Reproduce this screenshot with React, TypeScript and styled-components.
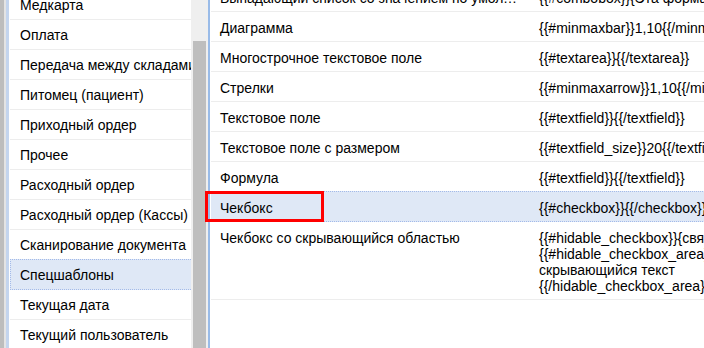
import styled, { createGlobalStyle } from 'styled-components';

const GlobalStyle = createGlobalStyle`
  html, body {
    margin: 0;
    padding: 0;
    background: #ffffff;
  }
  body {
    font-family: 'Liberation Sans', Arial, sans-serif;
    font-size: 14px;
    color: #000000;
  }
`;

const leftItems = [
  'Медкарта',
  'Оплата',
  'Передача между складами',
  'Питомец (пациент)',
  'Приходный ордер',
  'Прочее',
  'Расходный ордер',
  'Расходный ордер (Кассы)',
  'Сканирование документа',
  'Спецшаблоны',
  'Текущая дата',
  'Текущий пользователь',
];

const templates = [
  {
    name: 'Выпадающий список со значением по умолчанию',
    value: '{{#combobox}}{Эта форма}{{/combobox}}',
  },
  { name: 'Диаграмма', value: '{{#minmaxbar}}1,10{{/minmaxbar}}' },
  { name: 'Многострочное текстовое поле', value: '{{#textarea}}{{/textarea}}' },
  { name: 'Стрелки', value: '{{#minmaxarrow}}1,10{{/minmaxarrow}}' },
  { name: 'Текстовое поле', value: '{{#textfield}}{{/textfield}}' },
  {
    name: 'Текстовое поле с размером',
    value: '{{#textfield_size}}20{{/textfield_size}}',
  },
  { name: 'Формула', value: '{{#textfield}}{{/textfield}}' },
  { name: 'Чекбокс', value: '{{#checkbox}}{{/checkbox}}' },
  {
    name: 'Чекбокс со скрывающийся областью',
    value:
      '{{#hidable_checkbox}}{связь}{{/hidable_checkbox}}\n{{#hidable_checkbox_area}}\nскрывающийся текст\n{{/hidable_checkbox_area}}',
  },
];

const Page = styled.div`
  position: relative;
  display: flex;
  height: 348px;
  overflow: hidden;
`;

const WindowEdge = styled.div`
  flex: 0 0 10px;
  display: flex;
`;

const EdgeStripe = styled.div<{ $w: number; $color: string }>`
  flex: 0 0 ${({ $w }) => $w}px;
  background: ${({ $color }) => $color};
`;

const LeftPanel = styled.div`
  flex: 0 0 181px;
  overflow: hidden;
`;

const List = styled.div`
  margin-top: -10px;
`;

const ListItem = styled.div<{ $selected?: boolean }>`
  padding: 7px 0 6px 10px;
  line-height: 16px;
  white-space: nowrap;
  overflow: hidden;
  border-bottom: 1px solid #ededed;
  ${({ $selected }) =>
    $selected &&
    `
    background: #dfe8f6;
    margin-top: -1px;
    border-top: 1px dotted #a3bae9;
    border-left: 1px dotted #a3bae9;
    padding-left: 9px;
    border-bottom: 1px dotted #a3bae9;
  `}
`;

const ScrollTrack = styled.div`
  flex: 0 0 17px;
  background: #efefef;
  display: flex;
  justify-content: center;
`;

const ScrollThumb = styled.div`
  width: 13px;
  margin-top: 41px;
  background: #bebebe;
`;

const Splitter = styled.div`
  flex: 0 0 2px;
  background: #99bbe8;
  margin-right: 1px;
`;

const RightPanel = styled.div`
  flex: 1;
  overflow: hidden;
`;

const Table = styled.div`
  margin-top: -18px;
  width: 760px;
`;

const Row = styled.div<{ $selected?: boolean }>`
  display: grid;
  grid-template-columns: 319px 1fr;
  border-bottom: 1px solid #ededed;
  ${({ $selected }) =>
    $selected &&
    `
    background: #dfe8f6;
    margin-top: -1px;
    border-top: 1px dotted #a3bae9;
    border-bottom: 1px dotted #a3bae9;
  `}
`;

const NameCell = styled.div`
  padding: 8px 9px 5px 9px;
  line-height: 16px;
  white-space: nowrap;
  overflow: hidden;
  text-overflow: ellipsis;
`;

const ValueCell = styled.div`
  padding: 8px 9px 5px 9px;
  line-height: 16px;
  white-space: pre;
`;

const Highlight = styled.div`
  position: absolute;
  left: 205px;
  top: 191px;
  width: 113px;
  height: 25px;
  border: 3px solid #ff0000;
`;

const App = () => (
  <Page>
    <GlobalStyle />
    <WindowEdge>
      <EdgeStripe $w={4} $color="#bdbdbd" />
      <EdgeStripe $w={2} $color="#e4e4e4" />
      <EdgeStripe $w={3} $color="#c4d5ee" />
      <EdgeStripe $w={1} $color="#ffffff" />
    </WindowEdge>
    <LeftPanel>
      <List>
        {leftItems.map((item) => (
          <ListItem key={item} $selected={item === 'Спецшаблоны'}>
            {item}
          </ListItem>
        ))}
      </List>
    </LeftPanel>
    <ScrollTrack>
      <ScrollThumb />
    </ScrollTrack>
    <Splitter />
    <RightPanel>
      <Table>
        {templates.map((t) => (
          <Row key={t.name} $selected={t.name === 'Чекбокс'}>
            <NameCell>{t.name}</NameCell>
            <ValueCell>{t.value}</ValueCell>
          </Row>
        ))}
      </Table>
    </RightPanel>
    <Highlight />
  </Page>
);

export default App;
